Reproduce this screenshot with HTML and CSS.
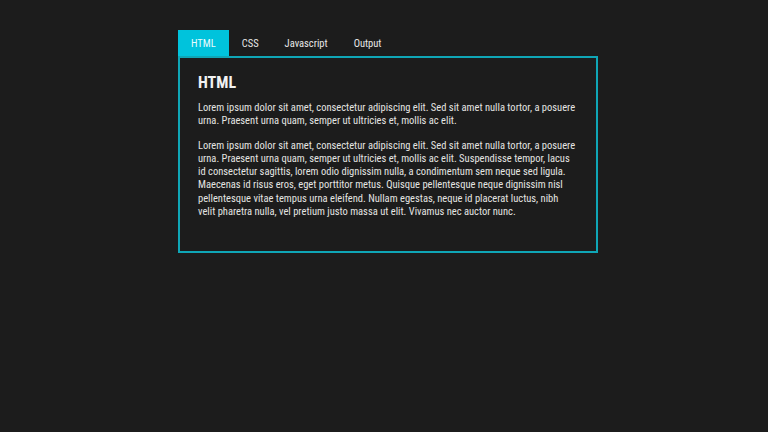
FILE: index.html
```html
<!DOCTYPE html>
<html>
<head>
<meta charset="utf-8">
<link rel="stylesheet" href="styles.css">
</head>
<body>
<div class="tabs">
  <nav class="tab-bar">
    <span class="tab active">HTML</span>
    <span class="tab">CSS</span>
    <span class="tab">Javascript</span>
    <span class="tab">Output</span>
  </nav>
  <section class="panel">
    <h2 class="panel-title">HTML</h2>
    <p>Lorem ipsum dolor sit amet, consectetur adipiscing elit. Sed sit amet nulla tortor, a posuere urna. Praesent urna quam, semper ut ultricies et, mollis ac elit.</p>
    <p>Lorem ipsum dolor sit amet, consectetur adipiscing elit. Sed sit amet nulla tortor, a posuere urna. Praesent urna quam, semper ut ultricies et, mollis ac elit. Suspendisse tempor, lacus id consectetur sagittis, lorem odio dignissim nulla, a condimentum sem neque sed ligula. Maecenas id risus eros, eget porttitor metus. Quisque pellentesque neque dignissim nisl pellentesque vitae tempus urna eleifend. Nullam egestas, neque id placerat luctus, nibh velit pharetra nulla, vel pretium justo massa ut elit. Vivamus nec auctor nunc.</p>
  </section>
</div>
</body>
</html>
```
FILE: styles.css
```css
html, body {
  margin: 0;
  height: 100%;
}
body {
  background-color: #1c1c1c;
  font-family: "Roboto Condensed", "Lato", sans-serif;
  color: #e4e4e2;
}
.tabs {
  width: 420px;
  margin-left: 178px;
  padding-top: 30px;
}
.tab-bar {
  display: flex;
  height: 26px;
}
.tab {
  display: flex;
  align-items: center;
  padding: 1px 13px 0 13px;
  font-size: 10.5px;
  color: #e8e8e8;
}
.tab.active {
  background: #00c3dc;
  color: #e9fbfd;
}
.panel {
  border: 2px solid #0fa6b6;
  padding: 14px 20px 33px 18px;
}
.panel-title {
  margin: 0 0 7px;
  font-size: 16px;
  font-weight: 700;
  color: #f2f2f2;
  line-height: 22px;
}
.panel p {
  margin: 0 0 11px;
  font-size: 10.5px;
  line-height: 13.3px;
}
.panel p:last-child {
  margin-bottom: 0;
}
```
